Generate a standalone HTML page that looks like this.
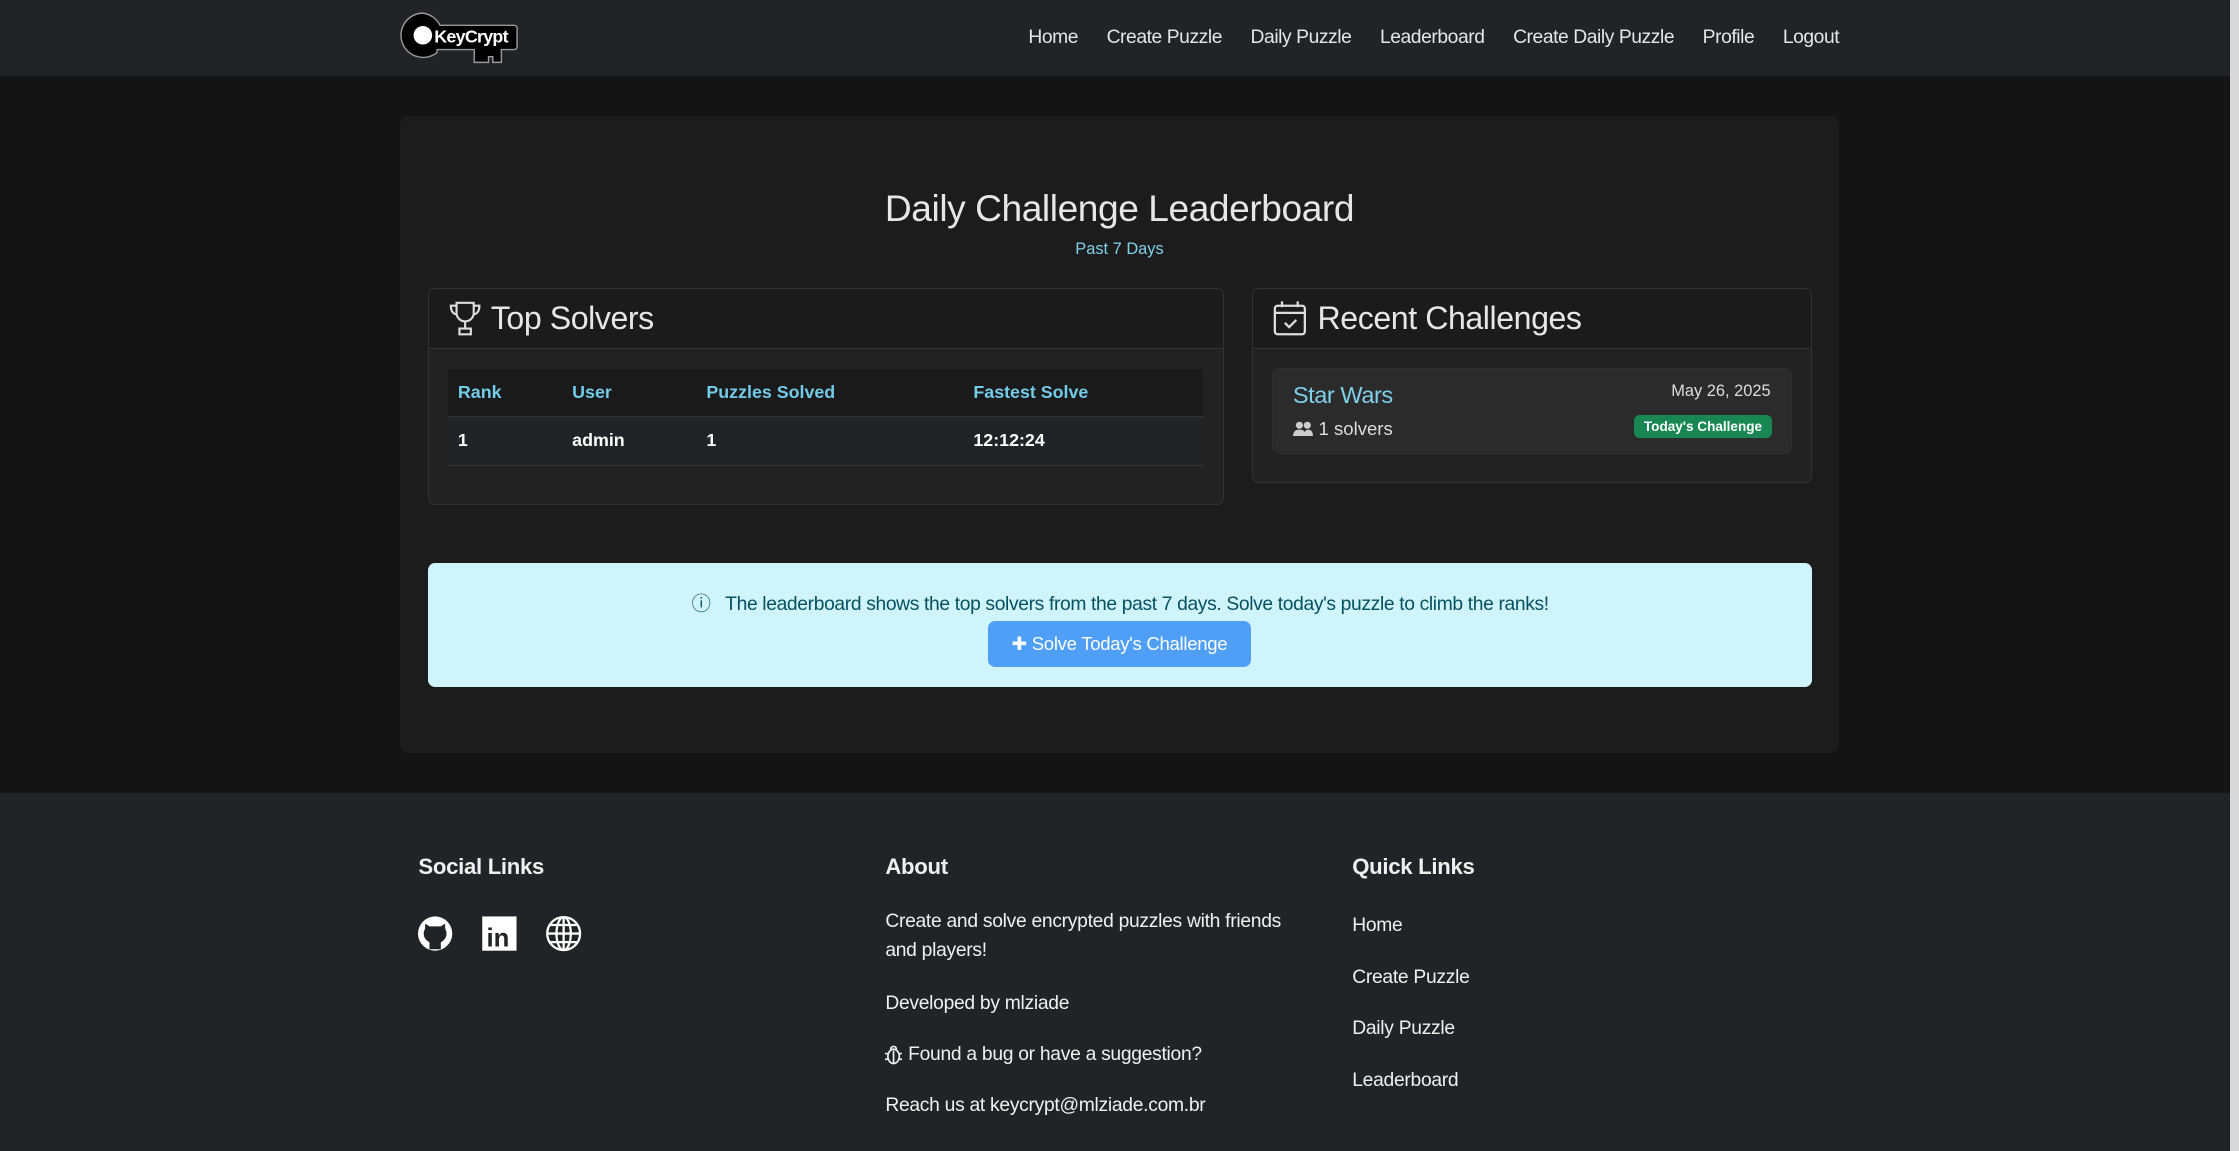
<!DOCTYPE html>
<html><head><meta charset="utf-8"><style>
html{zoom:1.42793}
*{box-sizing:border-box;margin:0;padding:0}
body{width:1568px;height:806px;background:#141414;font-family:"Liberation Sans",sans-serif;color:#dee2e6;position:relative;overflow:hidden}
.abs{position:absolute}
nav{position:absolute;left:0;top:0;width:1562px;height:53px;background:#212327}
nav .links{position:absolute;right:274px;top:19px;font-size:13.5px;letter-spacing:-0.3px;color:#e6e6e6;display:flex;gap:20px}
.scroll{position:absolute;right:0;top:0;width:6px;height:806px;background:#d8d8d8}
.main{position:absolute;left:280px;top:81px;width:1008px;height:446px;background:#1c1c1c;border-radius:6px}
.card{position:absolute;border:1px solid #333;border-radius:5px;background:#222;overflow:hidden}
.card .hd{height:42px;background:#1b1b1b;border-bottom:1px solid #333;font-size:22.5px;letter-spacing:-0.3px;color:#e6e6e6;display:flex;align-items:center;padding-left:13px;gap:6px}
th,td{text-align:left;font-size:12.5px;font-weight:bold;padding:0 7px}
th{color:#72cbe9;background:#1a1a1a;height:33px;border-bottom:1px solid #333}
td{color:#fff;background:#212327;height:34px;border-bottom:1px solid #333}
footer{position:absolute;left:0;top:555px;width:1562px;height:251px;background:#212327;color:#f0f0f0}
footer h5{position:absolute;font-size:15.5px;font-weight:bold;top:43px;letter-spacing:-0.2px}
footer p{position:absolute;font-size:13.5px;line-height:20px;letter-spacing:-0.2px}
</style></head><body>
<nav>
<svg class="abs" style="left:280px;top:8px" width="84" height="37" viewBox="0 0 84 37">
<path d="M16 1.5a15.5 15.5 0 1 0 10 27.5h0l0-2h26v9h10v-4h3v4h6v-9h9a2 2 0 0 0 2-2V12a2 2 0 0 0-2-2H28A15.5 15.5 0 0 0 16 1.5z" fill="#000" stroke="#999" stroke-width="1"/>
<circle cx="16" cy="17" r="6.5" fill="#fff"/>
<text x="24" y="22" font-family="Liberation Sans" font-size="12.5" font-weight="bold" fill="#fff" letter-spacing="-0.5">KeyCrypt</text>
</svg>
<div class="links"><span>Home</span><span>Create Puzzle</span><span>Daily Puzzle</span><span>Leaderboard</span><span>Create Daily Puzzle</span><span>Profile</span><span>Logout</span></div>
</nav>
<div class="scroll"></div>
<div class="main">
<div class="abs" style="left:0;width:1008px;top:50px;text-align:center;font-size:26px;letter-spacing:-0.3px;color:#e6e6e6">Daily Challenge Leaderboard</div>
<div class="abs" style="left:0;width:1008px;top:87px;text-align:center;font-size:11.5px;color:#7fd0ea">Past 7 Days</div>
</div>
<div class="card" style="left:300px;top:202px;width:557px;height:152px">
<div class="hd"><svg width="24" height="26" viewBox="0 0 24 26" fill="none" stroke="#ddd" stroke-width="1.5"><path d="M6 2h12v7a6 6 0 0 1-12 0z M6 4H2c0 4 2 6 4 6 M18 4h4c0 4-2 6-4 6 M12 15v5 M8 20h8v4H8z"/></svg>Top Solvers</div>
<table style="position:absolute;left:13px;top:56px;width:529px;border-collapse:collapse">
<tr><th style="width:80px">Rank</th><th style="width:94px">User</th><th style="width:187px">Puzzles Solved</th><th>Fastest Solve</th></tr>
<tr><td>1</td><td>admin</td><td>1</td><td>12:12:24</td></tr></table>
</div>
<div class="card" style="left:877px;top:202px;width:392px;height:136px">
<div class="hd"><svg width="26" height="26" viewBox="0 0 26 26" fill="none" stroke="#ddd" stroke-width="1.6"><rect x="2" y="4" width="21" height="20" rx="2"/><path d="M2 9h21M7 1v4M18 1v4M9 16l3 3 5-5"/></svg>Recent Challenges</div>
<div class="abs" style="left:13px;top:55px;width:364px;height:60px;background:#2b2b2b;border-radius:6px;border:1px solid #303030">
<div class="abs" style="left:14px;top:9px;font-size:16.5px;letter-spacing:-0.3px;color:#7fd0ea">Star Wars</div>
<div class="abs" style="left:14px;top:34px;font-size:13px;color:#ddd;display:flex;align-items:center;gap:4px"><svg width="14" height="11" viewBox="0 0 14 11" fill="#ccc"><circle cx="4.5" cy="3" r="2.5"/><circle cx="10" cy="3" r="2.5"/><path d="M0 11c0-4 2-5 4.5-5S9 7 9 11zM8 11c0-3 0-4 2-5 2.5 0 4 1 4 5z"/></svg>1 solvers</div>
<div class="abs" style="right:14px;top:9px;font-size:11.5px;color:#ddd">May 26, 2025</div>
<div class="abs" style="right:13px;top:32px;font-size:9.5px;font-weight:bold;color:#fff;background:#198754;border-radius:4px;padding:3px 7px">Today's Challenge</div>
</div></div>
<div class="abs" style="left:300px;top:394px;width:969px;height:87px;background:#cff4fc;border-radius:5px">
<div class="abs" style="left:0;width:969px;top:18px;text-align:center;font-size:13.5px;letter-spacing:-0.25px;color:#055160">ⓘ&nbsp;&nbsp; The leaderboard shows the top solvers from the past 7 days. Solve today's puzzle to climb the ranks!</div>
<div class="abs" style="left:392px;top:41px;width:184px;height:32px;background:#4e9ff5;border-radius:5px;color:#fff;font-size:13px;text-align:center;line-height:32px;letter-spacing:-0.2px">&#10010; Solve Today's Challenge</div>
</div>
<footer>
<h5 style="left:293px">Social Links</h5><h5 style="left:620px">About</h5><h5 style="left:947px">Quick Links</h5>
<svg class="abs" style="left:293px;top:86px" width="116" height="26" viewBox="0 0 116 26">
<circle cx="12" cy="13" r="12" fill="#fff"/><path d="M8 24v-5c-2-1-4-3-4-6 0-2 1-3 1-4V6l3 2h8l3-2v3c0 1 1 2 1 4 0 3-2 5-4 6v5z" fill="#212327"/>
<rect x="45" y="1" width="24" height="24" fill="#fff"/><text x="48" y="22" font-family="Liberation Sans" font-weight="bold" font-size="18" fill="#212327">in</text>
<g fill="none" stroke="#fff" stroke-width="1.6"><circle cx="102" cy="13" r="11.5"/><ellipse cx="102" cy="13" rx="5" ry="11.5"/><path d="M102 1.5v23M90.5 13h23M92 7h20M92 19h20"/></g>
</svg>
<p style="left:620px;top:81px;width:290px">Create and solve encrypted puzzles with friends and players!</p>
<p style="left:620px;top:138px">Developed by mlziade</p>
<p style="left:620px;top:174px;display:flex;align-items:center;gap:4px"><svg width="12" height="14" viewBox="0 0 12 14" fill="none" stroke="#eee" stroke-width="1.2"><ellipse cx="6" cy="8" rx="4" ry="5"/><path d="M4 3a2 2 0 0 1 4 0M6 4v9M0 6h2M10 6h2M0 10h2M10 10h2"/></svg>Found a bug or have a suggestion?</p>
<p style="left:620px;top:210px">Reach us at keycrypt@mlziade.com.br</p>
<p style="left:947px;top:84px">Home</p><p style="left:947px;top:120px">Create Puzzle</p><p style="left:947px;top:156px">Daily Puzzle</p><p style="left:947px;top:192px">Leaderboard</p>
</footer>
</body></html>
